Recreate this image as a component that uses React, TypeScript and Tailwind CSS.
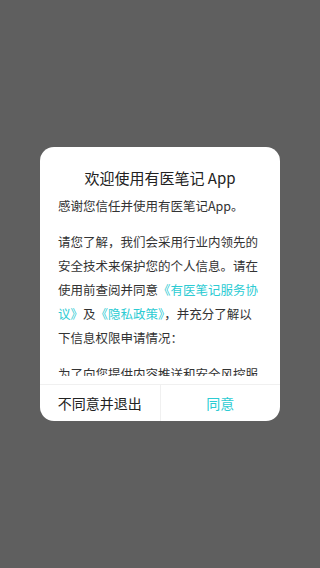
export default function App() {
  return (
    <div
      className="flex h-[568px] w-[320px] items-center justify-center bg-[#5f5f5f]"
      style={{ fontFamily: '"Noto Sans CJK SC", "Noto Sans", sans-serif' }}
    >
      <div className="flex h-[274px] w-[240px] flex-col overflow-hidden rounded-[14px] bg-white">
        <div className="pt-[20px] text-center text-[15px] leading-[22px] text-[#222]">
          欢迎使用有医笔记 App
        </div>
        <div className="mt-[5px] h-[182px] overflow-hidden px-[18px] text-[12.5px] leading-[24px] text-[#333]">
          <p className="mb-[12px]">感谢您信任并使用有医笔记App。</p>
          <p className="mb-[12px]">
            请您了解，我们会采用行业内领先的安全技术来保护您的个人信息。请在使用前查阅并同意
            <span className="text-[#2ccbd3]">《有医笔记服务协议》</span>及
            <span className="text-[#2ccbd3]">《隐私政策》</span>
            ，并充分了解以下信息权限申请情况：
          </p>
          <p>为了向您提供内容推送和安全风控服务，我们会申请以下权限：</p>
        </div>
        <div className="mt-[8px] flex h-[37px] border-t border-[#f0f0f0] text-[14px]">
          <button className="flex flex-1 items-center justify-center text-[#222]">
            不同意并退出
          </button>
          <div className="w-px bg-[#f0f0f0]" />
          <button className="flex flex-1 items-center justify-center text-[#2ccbd3]">
            同意
          </button>
        </div>
      </div>
    </div>
  );
}
